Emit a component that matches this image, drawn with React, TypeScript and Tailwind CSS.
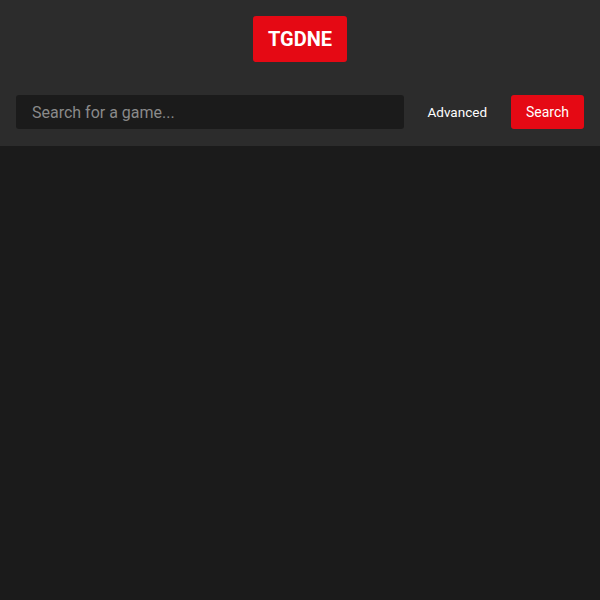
export default function App() {
  return (
    <div className="min-h-[600px] bg-[#1b1b1b] font-['Roboto',sans-serif]">
      <header className="bg-[#2c2c2c] px-4 pt-4 pb-[17px]">
        <div className="flex justify-center">
          <div className="flex h-[46px] w-[94px] items-center justify-center rounded-[3px] bg-[#e50914] text-[20px] font-bold text-white">
            TGDNE
          </div>
        </div>
        <div className="mt-[33px] flex h-[34px] items-stretch">
          <input
            type="text"
            placeholder="Search for a game..."
            className="flex-1 rounded-[3px] bg-[#1b1b1b] px-4 pt-px text-[16px] text-white placeholder:text-[#8a8a8a] outline-none"
          />
          <button className="px-6 pt-px text-[13.5px] text-white">Advanced</button>
          <button className="w-[73px] rounded-[3px] bg-[#e50914] pt-px text-[14px] text-white">
            Search
          </button>
        </div>
      </header>
    </div>
  );
}
